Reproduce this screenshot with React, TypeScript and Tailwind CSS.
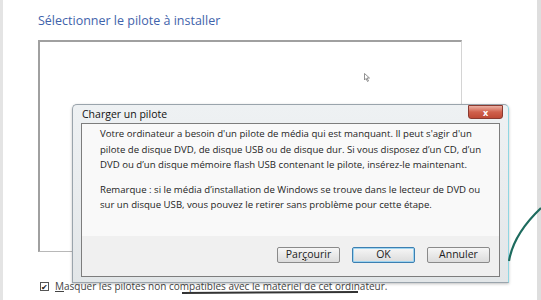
import React from 'react';

const font = { fontFamily: '"Open Sans", "Noto Sans", Arial, sans-serif' };

const para1 = [
  "Votre ordinateur a besoin d'un pilote de média qui est manquant. Il peut s'agir d'un",
  'pilote de disque DVD, de disque USB ou de disque dur. Si vous disposez d\u2019un CD, d\u2019un',
  'DVD ou d\u2019un disque mémoire flash USB contenant le pilote, insérez-le maintenant.',
];

const para2 = [
  'Remarque : si le média d\u2019installation de Windows se trouve dans le lecteur de DVD ou',
  'sur un disque USB, vous pouvez le retirer sans problème pour cette étape.',
];

function WinButton({ children, focused }: { children: React.ReactNode; focused?: boolean }) {
  return (
    <div
      className={`h-[16px] w-[63px] flex items-center justify-center rounded-[2px] text-[10.5px] text-[#222] bg-gradient-to-b from-[#f6f6f6] to-[#dcdcdc] ${
        focused ? 'border border-[#3c7fb1] shadow-[inset_0_0_0_1px_#9ed4f0]' : 'border border-[#8a8a8a]'
      }`}
    >
      {children}
    </div>
  );
}

export default function App() {
  return (
    <div className="relative w-[541px] h-[300px] overflow-hidden bg-white" style={font}>
      {/* window edges */}
      <div className="flex h-full">
        <div className="w-[3px] bg-[#e4e4e4]" />
        <div className="flex-1 flex flex-col pl-[35px] pt-[12px]">
          <h1 className="text-[12.5px] leading-[18px] text-[#3f63ab]">Sélectionner le pilote à installer</h1>
          <div className="mt-[10px] w-[424px] h-[212px] border-l-2 border-t-2 border-[#a0a0a0] border-r border-b border-r-[#d4d4d4] border-b-[#b8b8b8]" />
          <div className="mt-[27px] flex items-center gap-[6px] pl-[2px]">
            <div className="w-[9px] h-[9px] border border-[#555] flex items-center justify-center text-[8px] leading-none text-[#222]">
              ✔
            </div>
            <span className="text-[10px] text-[#444] whitespace-nowrap">
              <span className="underline">M</span>asquer les pilotes non compatibles avec le matériel de cet ordinateur.
            </span>
          </div>
        </div>
        <div className="w-[4px] bg-[#dedede]" />
      </div>

      {/* cursor */}
      <svg className="absolute left-[364px] top-[73px]" width="6" height="9" viewBox="0 0 6 9">
        <path d="M0.5 0.5 L0.5 7 L2 5.5 L3.5 8.5 L4.5 8 L3 5 L5.5 5 Z" fill="#fff" stroke="#777" strokeWidth="0.8" />
      </svg>

      {/* dialog */}
      <div className="absolute left-[72px] top-[104px] w-[437px] h-[179px] rounded-t-[5px] border border-[#9aa4ac] border-r-[#8fd6e2] bg-gradient-to-b from-[#eef1f3] via-[#e9ecee] to-[#e2e6e8] shadow-[0_1px_3px_rgba(0,0,0,0.25)] flex flex-col px-[8px] pb-[5px]">
        <div className="h-[18px] flex items-center justify-between">
          <span className="text-[10.5px] text-[#111] pt-[1px] pl-[1px]">Charger un pilote</span>
          <div className="self-start -mr-[3px] w-[35px] h-[14px] rounded-b-[3px] border border-[#8a3a30] bg-gradient-to-b from-[#eab0a4] via-[#d0604c] to-[#bf4a36] flex items-center justify-center">
            <span className="text-[9px] font-bold leading-none text-white">x</span>
          </div>
        </div>
        <div className="flex-1 border border-[#7d7d7d] flex flex-col">
          <div className="flex-1 bg-[#f9f9f9] pl-[18px] pt-[2px] text-[9.6px] leading-[15.5px] text-[#1e1e1e]">
            {para1.map(l => (
              <div key={l} className="whitespace-nowrap">{l}</div>
            ))}
            <div className="h-[9px]" />
            {para2.map(l => (
              <div key={l} className="whitespace-nowrap">{l}</div>
            ))}
          </div>
          <div className="h-[40px] bg-[#f0f0f0] flex items-center justify-end gap-[12px] pr-[9px] pb-[2px]">
            <WinButton>
              Par<span className="underline">ç</span>ourir
            </WinButton>
            <WinButton focused>OK</WinButton>
            <WinButton>Annuler</WinButton>
          </div>
        </div>
      </div>

      {/* annotation strokes */}
      <svg className="absolute left-0 top-0" width="541" height="300" viewBox="0 0 541 300">
        <path d="M182 293 L358 292" stroke="#333" strokeWidth="2" fill="none" />
        <path d="M509 261 C512 243 522 226 541 208" stroke="#1d6b5e" strokeWidth="2.2" fill="none" />
      </svg>
    </div>
  );
}
